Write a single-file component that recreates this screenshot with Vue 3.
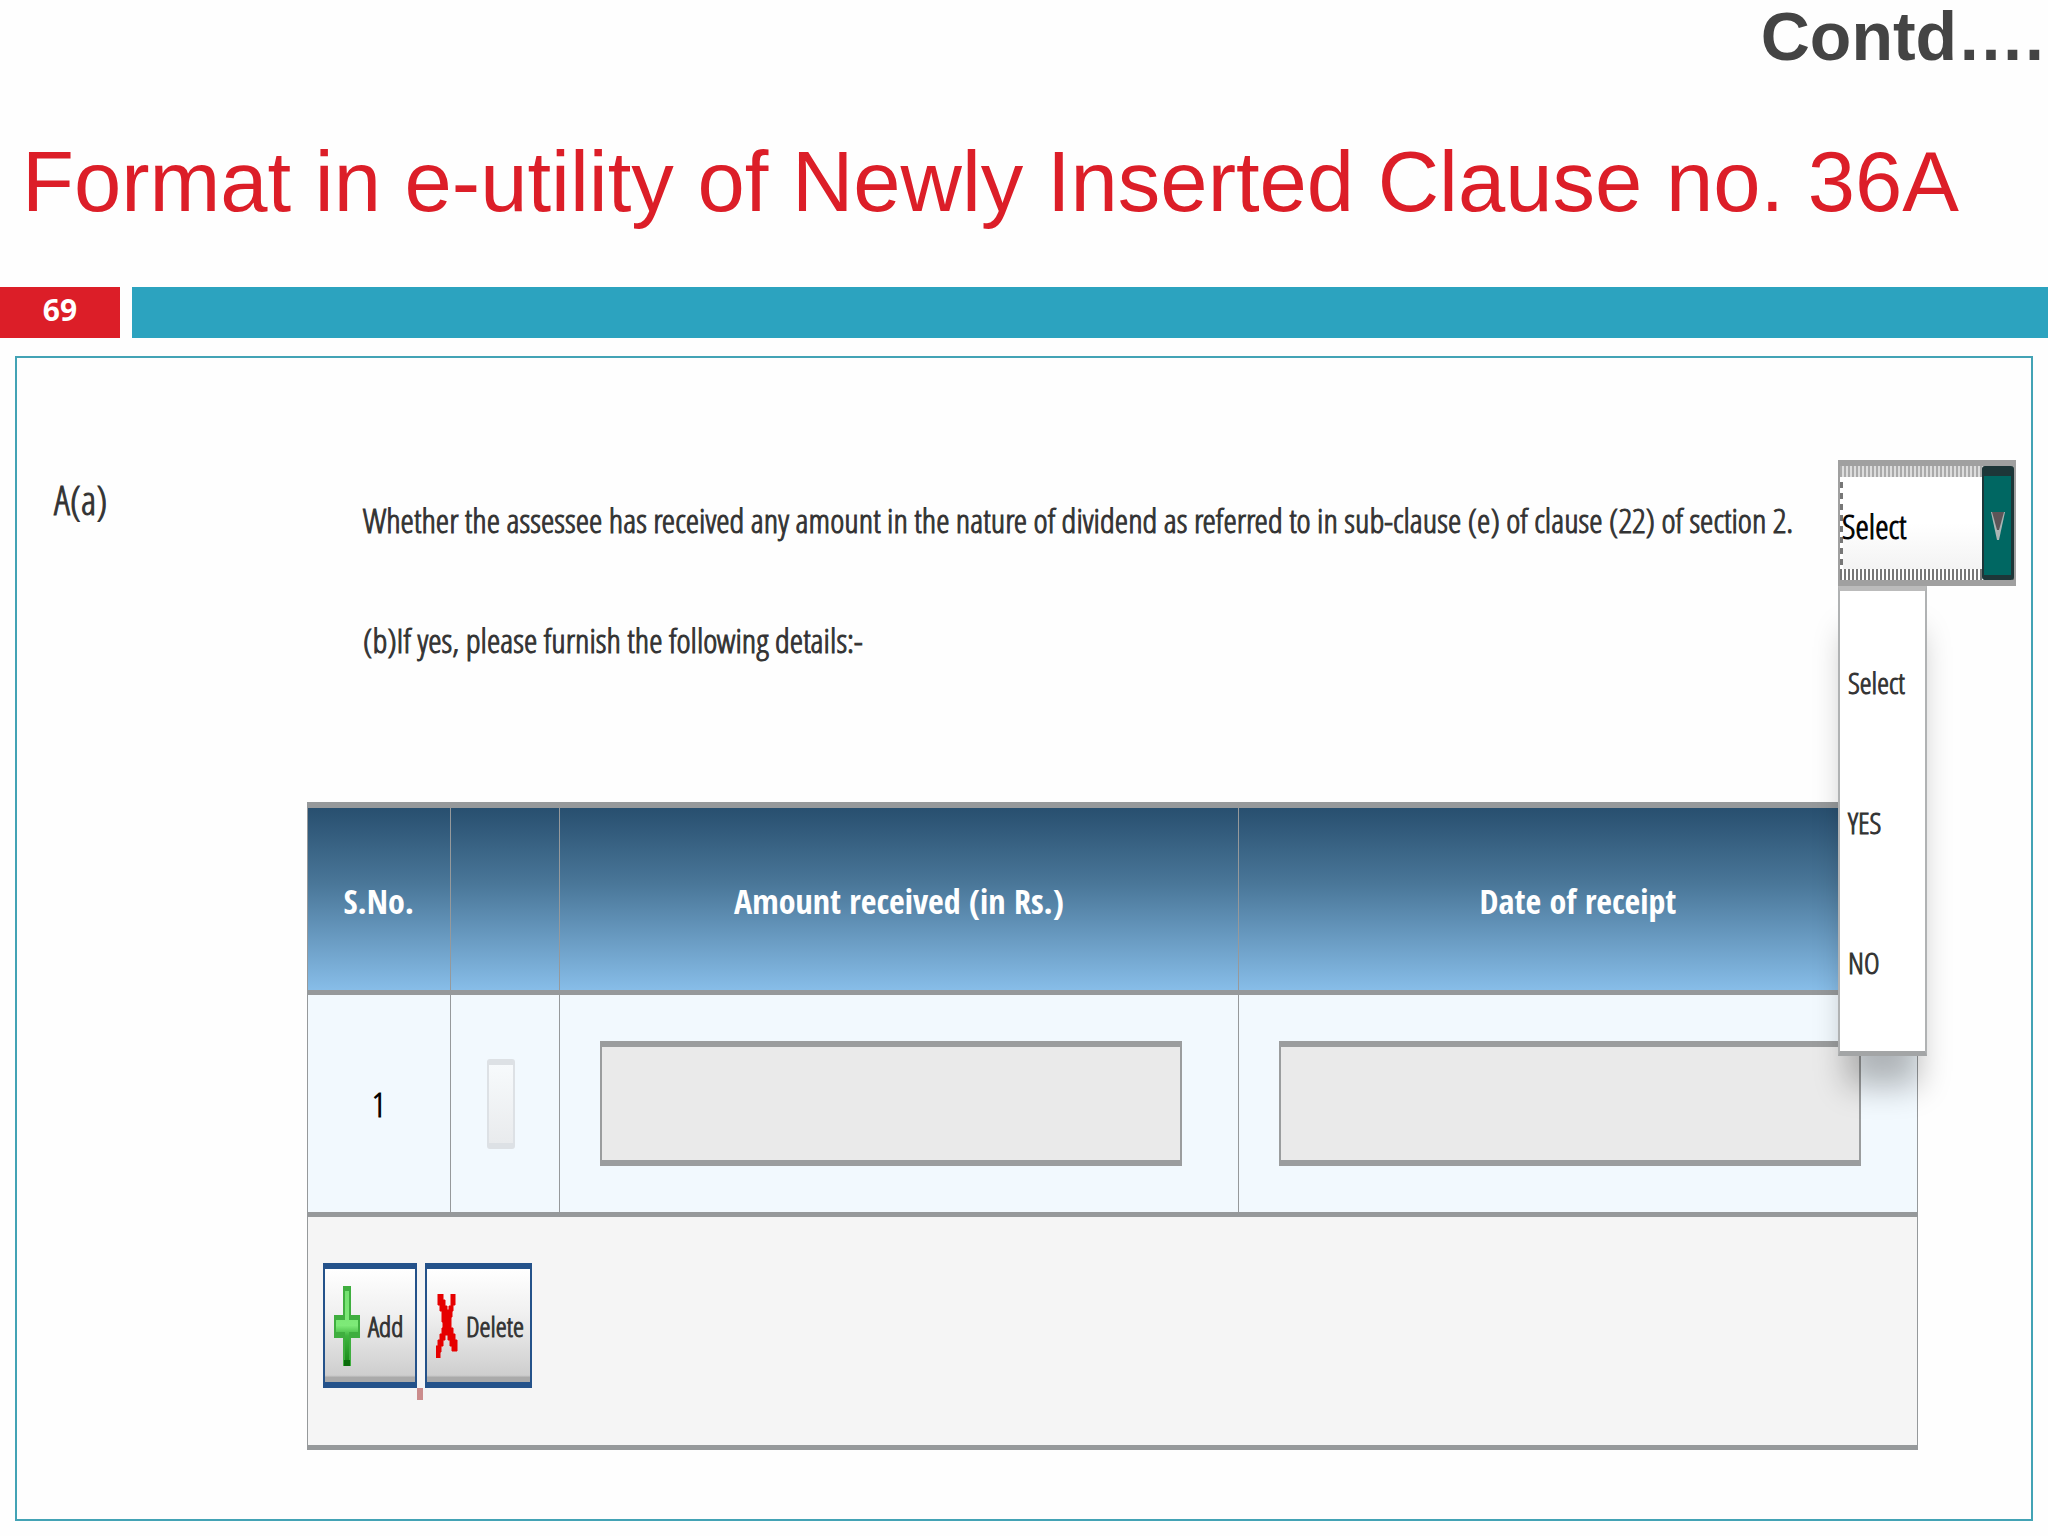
<script setup>
import { ref } from 'vue'

const answer = ref('Select')
const options = ['Select', 'YES', 'NO']
const rows = ref([{ id: 1, checked: false, amount: '', date: '' }])

function addRow() {
  rows.value.push({ id: rows.value.length + 1, checked: false, amount: '', date: '' })
}

function deleteRows() {
  rows.value = rows.value.filter((row) => !row.checked)
}
</script>

<template>
  <main class="slide">
    <p class="contd">Contd….</p>
    <h1 class="title">Format in e-utility of Newly Inserted Clause no. 36A</h1>

    <div class="band">
      <span class="page">69</span>
      <span class="bar"></span>
    </div>

    <section class="panel">
      <div class="question">
        <span class="clause">A(a)</span>
        <div class="wording">
          <label for="answer">Whether the assessee has received any amount in the nature of dividend as referred to in sub-clause (e) of clause (22) of section 2.</label>
          <p>(b)If yes, please furnish the following details:-</p>
        </div>
        <div class="picker">
          <select id="answer" v-model="answer">
            <option v-for="o in options" :key="o">{{ o }}</option>
          </select>
          <span class="arrow" aria-hidden="true">
            <svg width="14" height="28" viewBox="0 0 14 28">
              <path d="M0 0H14L8 28H6Z" fill="#a9b5b4" />
              <path d="M1 0H13L8 18H6Z" fill="#5c5558" />
            </svg>
          </span>
          <ul class="menu" role="listbox" aria-label="Answer">
            <li v-for="o in options" :key="o" role="option" @click="answer = o">{{ o }}</li>
          </ul>
        </div>
      </div>

      <table class="details">
        <colgroup>
          <col class="c-no" />
          <col class="c-tick" />
          <col class="c-amount" />
          <col />
        </colgroup>
        <thead>
          <tr>
            <th scope="col">S.No.</th>
            <th scope="col" aria-label="Tick"></th>
            <th scope="col">Amount received (in Rs.)</th>
            <th scope="col">Date of receipt</th>
          </tr>
        </thead>
        <tbody>
          <tr v-for="row in rows" :key="row.id">
            <td class="number">{{ row.id }}</td>
            <td class="tick"><input v-model="row.checked" type="checkbox" aria-label="Tick row" /></td>
            <td class="entry"><input v-model="row.amount" type="text" aria-label="Amount received (in Rs.)" /></td>
            <td class="entry"><input v-model="row.date" type="text" aria-label="Date of receipt" /></td>
          </tr>
        </tbody>
        <tfoot>
          <tr>
            <td colspan="4">
              <div class="actions">
                <button type="button" class="add" @click="addRow">
                  <svg width="26" height="80" viewBox="0 0 26 80" aria-hidden="true">
                    <defs>
                      <linearGradient id="plus" x1="0" y1="0" x2="0" y2="1">
                        <stop offset="0" stop-color="#74e070" />
                        <stop offset="0.5" stop-color="#7eea78" />
                        <stop offset="0.65" stop-color="#3fb53f" />
                        <stop offset="1" stop-color="#1e8f1e" />
                      </linearGradient>
                    </defs>
                    <path d="M9 0H17V29H26V52H17V80H9V52H0V29H9Z" fill="#3fae3f" />
                    <path d="M11 5H15V34H24V46H15V74H11V46H2V34H11Z" fill="url(#plus)" />
                    <path d="M10 74H16V80H10Z" fill="#0b6b0b" />
                  </svg>
                  <span>Add</span>
                </button>
                <button type="button" class="delete" @click="deleteRows">
                  <svg width="22" height="64" viewBox="0 0 22 64" aria-hidden="true">
                    <path d="M2 0H7V6H9V12H11V16H13V12H15V0H19V11H17V17H16V23H15V34H17V40H19V46H21V57H16V52H14V46H12V41H9V46H7V52H5V58H4V64H0V52H2V46H4V40H6V34H7V28H6V17H4V11H2Z" fill="#e60000" stroke="#e60000" />
                  </svg>
                  <span>Delete</span>
                </button>
                <i class="mark" aria-hidden="true"></i>
              </div>
            </td>
          </tr>
        </tfoot>
      </table>
    </section>
  </main>
</template>

<style>
body {
  background: #fefefe;
}
</style>

<style scoped>
.slide {
  padding-bottom: 15px;
  font-family: "Open Sans Condensed Light", "Open Sans Condensed", "Liberation Sans", sans-serif;
  font-size: 34px;
  color: #333;
}

.contd {
  margin: 0;
  padding-right: 4px;
  font: bold 68px/72px "Liberation Sans", Arial, sans-serif;
  color: #444;
  text-align: right;
}

.title {
  margin: 60px 0 55px 22px;
  font: normal 85px/100px "Liberation Sans", Arial, sans-serif;
  color: #dc1e28;
  white-space: nowrap;
}

.band {
  display: flex;
  gap: 12px;
  height: 51px;
}

.page {
  width: 120px;
  background: #dc1e28;
  color: #fff;
  font: bold 30px/46px "Open Sans", sans-serif;
  text-align: center;
}

.bar {
  flex: 1;
  background: #2ca3bf;
}

.panel {
  margin: 18px 15px 0;
  padding: 102px 0 69px;
  border: 2px solid #43a3b5;
}

.question {
  display: flex;
  padding: 0 15px 0 37px;
  -webkit-text-stroke: 1px;
}

.clause {
  flex: none;
  width: 309px;
  font-size: 40px;
  line-height: 80px;
}

.wording {
  flex: 1;
  min-width: 0;
  line-height: 120px;
  white-space: nowrap;
}

.wording label {
  display: block;
}

.wording p {
  margin: 0;
}

.picker {
  flex: none;
  position: relative;
  width: 178px;
  height: 126px;
}

.picker select {
  appearance: none;
  box-sizing: border-box;
  width: 100%;
  height: 100%;
  margin: 0;
  padding: 6px 36px 0 2px;
  border: 2px solid #a0a0a0;
  border-width: 6px 2px;
  border-radius: 0;
  background:
    repeating-linear-gradient(90deg, #aaa 0 2px, #ddd 2px 4px) 0 0 / 100% 11px no-repeat,
    repeating-linear-gradient(90deg, #777 0 2px, #fff 2px 4px) 0 100% / 100% 11px no-repeat,
    repeating-linear-gradient(180deg, #fff 0 5px, #777 5px 11px) 0 0 / 3px 100% no-repeat,
    linear-gradient(#fff 50%, #f0f0f0);
  color: #000;
  font: inherit;
  outline: none;
}

.arrow {
  position: absolute;
  top: 6px;
  right: 2px;
  bottom: 6px;
  width: 32px;
  box-sizing: border-box;
  display: flex;
  align-items: center;
  justify-content: center;
  border: 2px solid #1d3638;
  border-width: 10px 3px 5px 2px;
  border-radius: 3px;
  background: #006762;
  pointer-events: none;
}

.menu {
  position: absolute;
  top: 100%;
  left: 0;
  box-sizing: border-box;
  width: 89px;
  margin: 0;
  padding: 22px 0 18px 8px;
  border: 2px solid #b0b2b3;
  border-top: 5px solid #bbb;
  border-bottom: 5px solid #a3a5a6;
  background: #fff;
  box-shadow: 0 38px 32px -8px rgba(0, 0, 0, 0.28);
  list-style: none;
  font-size: 30px;
  line-height: 140px;
}

.details {
  width: calc(100% - 403px);
  margin: 102px 0 0 290px;
  border: 1px solid #96999b;
  border-top-width: 6px;
  border-bottom: 0;
  border-spacing: 0;
  table-layout: fixed;
}

.c-no {
  width: 8.8%;
}

.c-tick {
  width: 6.8%;
}

.c-amount {
  width: 42.2%;
}

th,
td {
  box-sizing: border-box;
  padding: 0;
  border-bottom: 5px solid #96999b;
}

th + th,
td + td {
  border-left: 1px solid #96999b;
}

th {
  height: 187px;
  padding-top: 4px;
  background: linear-gradient(#284f6f, #4a7799 42%, #87bde8);
  color: #fff;
  font-family: "Open Sans Condensed", "Liberation Sans", sans-serif;
  font-weight: bold;
}

tbody td {
  height: 222px;
  background: #f2f9fe;
}

.number {
  color: #000;
  text-align: center;
  -webkit-text-stroke: 1px;
}

.tick {
  padding-right: 8px;
}

.entry {
  padding-left: 40px;
}

input {
  appearance: none;
  box-sizing: border-box;
  display: block;
  margin: 0;
  border-radius: 0;
  font: inherit;
}

input[type="text"] {
  width: calc(100% - 56px);
  height: 125px;
  padding: 0 8px;
  border: 2px solid #9b9d9e;
  border-width: 6px 2px;
  background: #eaeaea;
}

input[type="checkbox"] {
  width: 28px;
  height: 90px;
  margin: 0 auto;
  border: 2px solid #dde1e5;
  border-width: 6px 2px;
  border-radius: 3px;
  background: linear-gradient(#f7fafc, #e9ebed);
}

tfoot td {
  height: 233px;
  background: #f5f5f5;
  vertical-align: top;
}

.actions {
  display: flex;
  gap: 8px;
  position: relative;
  width: max-content;
  padding: 46px 0 0 15px;
}

button {
  box-sizing: border-box;
  display: flex;
  align-items: center;
  gap: 8px;
  height: 125px;
  margin: 0;
  padding: 0 0 0 9px;
  border: 2px solid #24528a;
  border-width: 6px 2px;
  background: linear-gradient(#fff, #f0f0f0 40%, #cecece 94%, #aaa 96%);
  color: #333;
  font: inherit;
  font-size: 28px;
  -webkit-text-stroke: 1px;
}

button svg {
  flex: none;
}

.add {
  width: 94px;
}

.delete {
  width: 107px;
}

.mark {
  position: absolute;
  left: 109px;
  top: 100%;
  width: 6px;
  height: 12px;
  background: #cb8c8c;
}
</style>
